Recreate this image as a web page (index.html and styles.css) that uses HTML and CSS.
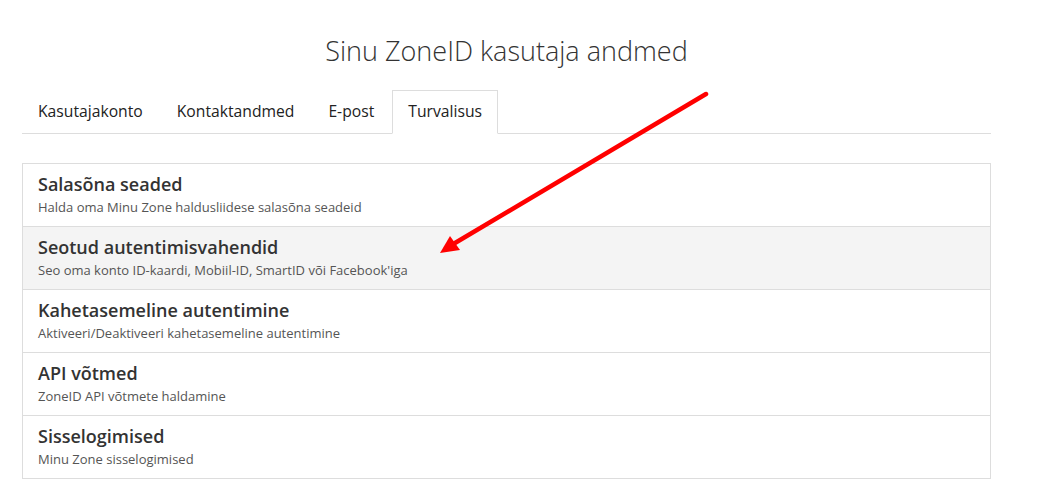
FILE: index.html
```html
<!DOCTYPE html>
<html lang="et">
<head>
<meta charset="utf-8">
<title>Sinu ZoneID kasutaja andmed</title>
<link rel="stylesheet" href="styles.css">
</head>
<body>
<div class="page">
  <h1 class="title">Sinu ZoneID kasutaja andmed</h1>
  <ul class="tabs">
    <li class="tab"><a>Kasutajakonto</a></li>
    <li class="tab"><a>Kontaktandmed</a></li>
    <li class="tab"><a>E-post</a></li>
    <li class="tab active"><a>Turvalisus</a></li>
  </ul>
  <div class="list">
    <div class="item">
      <div class="item-title">Salasõna seaded</div>
      <div class="item-sub">Halda oma Minu Zone haldusliidese salasõna seadeid</div>
    </div>
    <div class="item hover">
      <div class="item-title">Seotud autentimisvahendid</div>
      <div class="item-sub">Seo oma konto ID-kaardi, Mobiil-ID, SmartID või Facebook'iga</div>
    </div>
    <div class="item">
      <div class="item-title">Kahetasemeline autentimine</div>
      <div class="item-sub">Aktiveeri/Deaktiveeri kahetasemeline autentimine</div>
    </div>
    <div class="item">
      <div class="item-title">API võtmed</div>
      <div class="item-sub">ZoneID API võtmete haldamine</div>
    </div>
    <div class="item">
      <div class="item-title">Sisselogimised</div>
      <div class="item-sub">Minu Zone sisselogimised</div>
    </div>
  </div>
</div>
<svg class="arrow" width="1042" height="491" viewBox="0 0 1042 491" xmlns="http://www.w3.org/2000/svg">
  <line x1="706" y1="94" x2="455" y2="243" stroke="#ff0000" stroke-width="4.5" stroke-linecap="round"/>
  <polygon points="440,253 450,236 460,250" fill="#ff0000"/>
</svg>
</body>
</html>
```
FILE: styles.css
```css
html, body {
  margin: 0;
  padding: 0;
  background: #fff;
}
body {
  font-family: "Open Sans", "Liberation Sans", sans-serif;
  color: #333;
  position: relative;
  width: 1042px;
  height: 491px;
  overflow: hidden;
}
.page {
  margin-left: 22px;
  width: 969px;
  padding-top: 36px;
}
.title {
  margin: 0 0 24px;
  font-size: 27px;
  font-weight: 300;
  line-height: 30px;
  text-align: center;
  color: #333;
}
.tabs {
  list-style: none;
  margin: 0;
  padding: 0;
  display: flex;
  border-bottom: 1px solid #ddd;
}
.tab {
  margin-bottom: -1px;
  margin-right: 2px;
}
.tab a {
  display: block;
  padding: 9px 15px 11px;
  font-size: 15.7px;
  line-height: 22px;
  color: #222;
  border: 1px solid transparent;
}
.tab.active a {
  border-color: #ddd;
  border-bottom-color: #fff;
  background: #fff;
}
.list {
  margin-top: 29px;
  border: 1px solid #ddd;
}
.item {
  padding: 10px 15px;
  border-top: 1px solid #ddd;
}
.item:first-child {
  border-top: 0;
}
.item.hover {
  background: #f4f4f4;
}
.item-title {
  font-size: 18px;
  font-weight: 600;
  line-height: 21px;
  margin-bottom: 3px;
  color: #333;
}
.item-sub {
  font-size: 13px;
  line-height: 18px;
  color: #555;
}
.arrow {
  position: absolute;
  left: 0;
  top: 0;
  pointer-events: none;
}
```
